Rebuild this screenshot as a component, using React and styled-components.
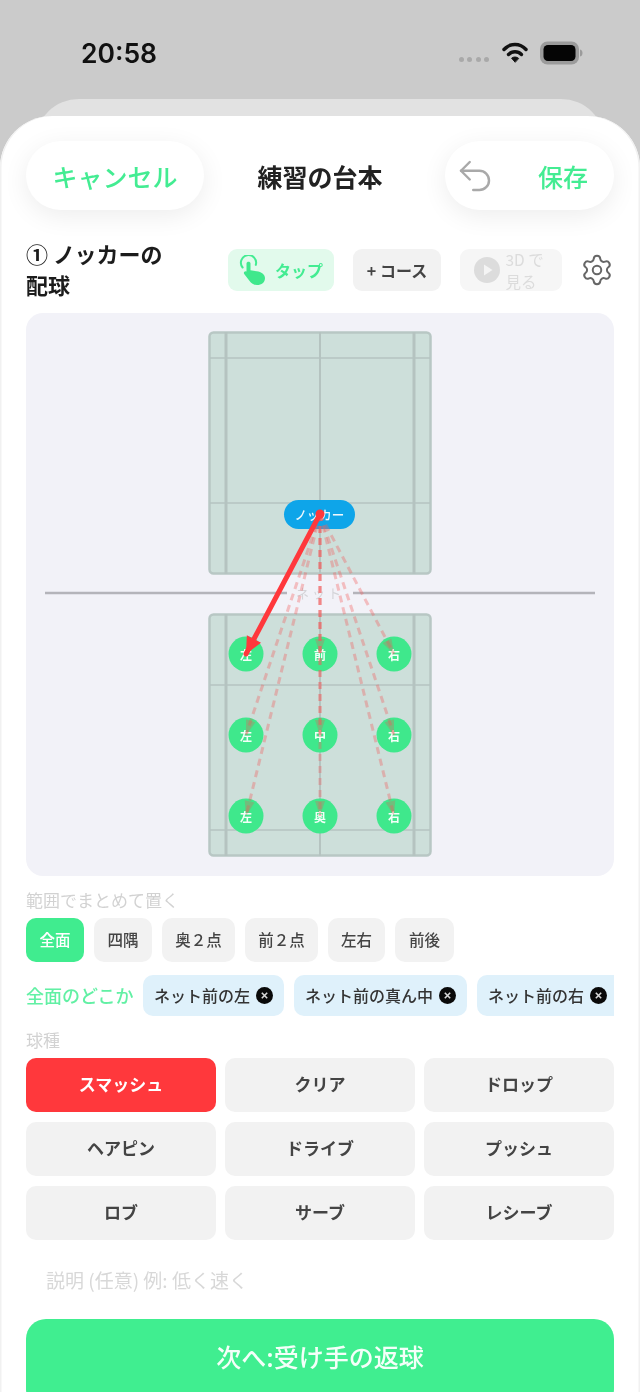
import React from "react";
import styled, { createGlobalStyle } from "styled-components";
import { Settings, Undo2 } from "lucide-react";

const Global = createGlobalStyle`
  html, body { margin: 0; padding: 0; background: #cbcbcb; }
  body { font-family: "Noto Sans CJK JP", "Noto Sans", sans-serif; }
  * { box-sizing: border-box; }
`;

const Screen = styled.div`
  position: relative; width: 640px; height: 1392px; overflow: hidden;
  background: #cbcbcb; filter: blur(0.7px);
`;
const StatusBar = styled.div`
  height: 99px; padding: 35px 57px 0 81px; display: flex; align-items: flex-start; justify-content: space-between;
`;
const Time = styled.div`
  font: 600 26.5px/36px "Inter", "Liberation Sans", sans-serif; color: #111;
`;
const StatusIcons = styled.div`
  display: flex; align-items: center; gap: 12px; height: 36px;
`;
const Signal = styled.div`
  display: flex; gap: 3.5px; margin-top: 12px; margin-right: 1px;
  i { display: block; width: 5px; height: 5px; border-radius: 50%; background: #a9a9a9; }
`;
const BackSheet = styled.div`
  height: 60px; margin: 0 35px -43px; background: #e2e2e2; border-radius: 44px 44px 0 0;
`;
const Sheet = styled.div`
  position: relative; height: 1276px; background: #fff; border-radius: 52px 52px 0 0;
  padding: 25px 26px 0; box-shadow: inset 1.5px 0 0 #f1f1f1, inset -1.5px 0 0 #f1f1f1;
`;
const Header = styled.div`
  display: flex; align-items: center; justify-content: space-between; height: 69px;
`;
const Pill = styled.div`
  height: 69px; border-radius: 35px; background: #fff; display: flex; align-items: center;
  box-shadow: 0 6px 26px rgba(0,0,0,.075); color: #43ec92; font-size: 25px; font-weight: 500;
`;
const CancelPill = styled(Pill)` width: 178px; justify-content: center; `;
const SavePill = styled(Pill)` width: 169px; padding: 0 26px 0 9px; justify-content: space-between; `;
const Title = styled.div`
  font-size: 25px; font-weight: 700; color: #222; margin-right: 9px;
`;
const ToolRow = styled.div`
  display: flex; align-items: center; height: 72px; margin-top: 24px; margin-bottom: 8px;
`;
const StepTitle = styled.div`
  width: 202px; font-size: 22px; line-height: 31px; font-weight: 700; color: #1c1c1c; white-space: nowrap; padding-bottom: 3px;
`;
const Tool = styled.div`
  height: 42px; border-radius: 9px; display: flex; align-items: center; justify-content: center; flex: none;
  width: ${p => p.$w}px; margin-right: ${p => p.$mr}px;
  background: ${p => p.$bg}; color: ${p => p.$fg}; font-size: 16px; font-weight: 700; padding-bottom: 1px;
`;
const TapText = styled.span`
  margin-left: 8px;
`;
const ThreeD = styled.span`
  display: block; width: 43px; font-size: 15.5px; line-height: 22px; font-weight: 400; margin-left: 6px; color: #dcdcdc;
`;
const Gear = styled.div`
  color: #666; display: flex; margin-left: 18px;
`;
const Court = styled.div`
  position: relative; height: 563px; background: #f2f2f8; border-radius: 17px; margin-top: -1px; display: flex; justify-content: center;
`;
const CourtArt = styled.svg`
  display: block; width: 588px; height: 563px;
`;
const NetLabel = styled.div`
  position: absolute; left: 261px; top: 271px; width: 66px; text-align: center; font-size: 13px; line-height: 18px; color: #d4d4d8; letter-spacing: 3px;
`;
const Knocker = styled.div`
  position: absolute; left: 258px; top: 187px; width: 71px; height: 29px; border-radius: 15px; background: #0ea5e9; color: #eef8fd;
  display: flex; align-items: center; justify-content: center; font-size: 12.5px; font-weight: 500;
`;
const Spot = styled.div`
  position: absolute; width: 35px; height: 35px; border-radius: 50%; background: #3fe88c; color: #f2fff8;
  display: flex; align-items: center; justify-content: center; font-size: 12px; font-weight: 700; transform: translate(-50%, -50%);
`;
const Overlay = styled.svg`
  position: absolute; left: 0; top: 0; width: 588px; height: 563px; pointer-events: none;
`;
const SectionLabel = styled.div`
  font-size: 17px; line-height: 20px; color: #d2d2d2; margin-top: ${p => p.$mt}px;
`;
const RangeRow = styled.div`
  display: flex; gap: 10px; margin-top: 8px;
`;
const RangeChip = styled.div`
  height: 44px; width: ${p => p.$w}px; border-radius: 10px; display: flex; align-items: center; justify-content: center; padding-bottom: 2px;
  font-size: 15.5px; font-weight: 500; color: ${p => p.$on ? "#fff" : "#444"}; background: ${p => p.$on ? "#40ec8f" : "#f2f2f2"};
`;
const SpotRow = styled.div`
  display: flex; align-items: center; gap: 10px; margin-top: 13px; height: 41px; overflow: hidden;
`;
const SpotLabel = styled.div`
  font-size: 18px; font-weight: 500; color: #62f0a4; white-space: nowrap; width: 107px; flex: none; padding-bottom: 2px;
`;
const SpotChip = styled.div`
  flex: none; height: 41px; width: ${p => p.$w}px; border-radius: ${p => p.$cut ? "10px 0 0 10px" : "10px"}; background: #dff1fb; display: flex; align-items: center; padding-left: 11px; gap: 6px; padding-bottom: 2px;
  font-size: 16px; font-weight: 500; color: #333; white-space: nowrap;
`;
const Close = styled.svg`
  flex: none; width: 17px; height: 17px; margin-top: 2px;
`;
const ShotGrid = styled.div`
  display: grid; grid-template-columns: repeat(3, 190px); column-gap: 9px; row-gap: 10px; margin-top: 8px;
`;
const Shot = styled.div`
  height: 54px; border-radius: 10px; display: flex; align-items: center; justify-content: center; padding-bottom: 3px;
  font-size: 17px; font-weight: 700; color: ${p => p.$on ? "#fff" : "#444"}; background: ${p => p.$on ? "#ff383c" : "#f2f2f2"};
`;
const Note = styled.div`
  margin-top: 25px; padding-left: 20px; font-size: 19px; line-height: 30px; color: #d8d8d8; height: 30px;
`;
const Next = styled.div`
  margin-top: 24px; height: 90px; border-radius: 20px; background: #40ee90; color: #f4fff9;
  display: flex; align-items: flex-start; justify-content: center; padding-top: 18px; font-size: 25px; line-height: 38px; font-weight: 500;
`;

const Wifi = () => (
  <svg width="26" height="22" viewBox="0 0 26 22" fill="none" stroke="#111" strokeLinecap="round">
    <path d="M2 7.5C8 0.8 18 0.8 24 7.5" strokeWidth="3.4" />
    <path d="M6.5 12.5C10.2 8.8 15.8 8.8 19.5 12.5" strokeWidth="3.4" />
    <path d="M13 20l-3.4-3.8c2-1.6 4.8-1.6 6.8 0z" fill="#111" strokeWidth="1" strokeLinejoin="round" />
  </svg>
);
const Battery = () => (
  <svg width="43" height="24" viewBox="0 0 43 24">
    <rect x="0" y="0.5" width="39" height="23" rx="7.5" fill="#9b9b9b" />
    <rect x="3.5" y="4" width="32" height="16" rx="4.5" fill="#050505" />
    <path d="M40 8.5c2 .5 2.5 2 2.5 3.5s-.5 3-2.5 3.5z" fill="#9b9b9b" />
  </svg>
);
const Tap = () => (
  <svg width="28" height="30" viewBox="0 0 28 30" fill="none">
    <path d="M3.6 12.5a7.6 7.6 0 1 1 13.2-2.6" stroke="#43ec92" strokeWidth="2" strokeLinecap="round" />
    <path d="M7.5 8.5c0-2.4 4-2.4 4 0v6.8l6.2 1c4.6.8 8.3 3 8.3 6.7 0 4.4-3.4 7-8 7-3.6 0-5.8-1.5-7.6-4.2l-5.2-6.8c-1.3-2 1.4-3.8 2.9-2l-.6.2z" fill="#3fe88c" />
  </svg>
);
const Play = () => (
  <svg width="26" height="26" viewBox="0 0 26 26">
    <circle cx="13" cy="13" r="13" fill="#dcdcdc" />
    <path d="M10 7.5v11l8.5-5.5z" fill="#f4f4f4" />
  </svg>
);
const CloseIcon = () => (
  <Close viewBox="0 0 17 17">
    <circle cx="8.5" cy="8.5" r="8.5" fill="#0a0a0a" />
    <path d="M5.8 5.8l5.4 5.4M11.2 5.8l-5.4 5.4" stroke="#d9d9d9" strokeWidth="1.6" />
  </Close>
);

const ox = 26, oy = 313;
const xs = [246, 320, 394], ys = [654, 735, 816];
const dots = ys.flatMap(y => xs.map(x => ({ x: x - ox, y: y - oy })));
const labels = ["左", "前", "右", "左", "中", "右", "左", "奥", "右"];
const origin = { x: 320 - ox, y: 514 - oy };

const arrowHead = (d, len, half) => {
  const dx = origin.x - d.x, dy = origin.y - d.y;
  const n = Math.hypot(dx, dy), ux = dx / n, uy = dy / n;
  const bx = d.x + ux * len, by = d.y + uy * len;
  return `${d.x},${d.y} ${bx - uy * half},${by + ux * half} ${bx + uy * half},${by - ux * half}`;
};

const CourtSide = ({ top, horiz }) => (
  <g>
    <rect x={183.5} y={top + 0.5} width={221} height={241} rx={4} fill="#cddfda" stroke="#b8c7c4" strokeWidth="2.5" />
    <g stroke="#b5c3c0">
      <line x1={200} x2={200} y1={top} y2={top + 242} strokeWidth="3" />
      <line x1={294} x2={294} y1={top} y2={top + 242} strokeWidth="2" />
      <line x1={388} x2={388} y1={top} y2={top + 242} strokeWidth="3" />
    </g>
    <g stroke="#b5c3c0" strokeWidth="1.5">
      {horiz.map(h => <line key={h} x1={184} x2={404} y1={top + h} y2={top + h} />)}
    </g>
  </g>
);

const ranges = [["全面", 58, true], ["四隅", 58], ["奥２点", 73], ["前２点", 73], ["左右", 57], ["前後", 59]];
const shots = ["スマッシュ", "クリア", "ドロップ", "ヘアピン", "ドライブ", "プッシュ", "ロブ", "サーブ", "レシーブ"];

export default function App() {
  return (
    <Screen>
      <Global />
      <StatusBar>
        <Time>20:58</Time>
        <StatusIcons>
          <Signal><i /><i /><i /><i /></Signal>
          <Wifi />
          <Battery />
        </StatusIcons>
      </StatusBar>
      <BackSheet />
      <Sheet>
        <Header>
          <CancelPill>キャンセル</CancelPill>
          <Title>練習の台本</Title>
          <SavePill>
            <Undo2 size={42} color="#a9a9a9" strokeWidth={1.4} />
            <span>保存</span>
          </SavePill>
        </Header>
        <ToolRow>
          <StepTitle>① ノッカーの<br />配球</StepTitle>
          <Tool $w={106} $mr={19} $bg="#e2faec" $fg="#43ec92"><Tap /><TapText>タップ</TapText></Tool>
          <Tool $w={88} $mr={19} $bg="#f2f2f2" $fg="#444">+ コース</Tool>
          <Tool $w={102} $mr={0} $bg="#f6f6f6" $fg="#dcdcdc"><Play /><ThreeD>3D で見る</ThreeD></Tool>
          <Gear><Settings size={34} strokeWidth={1.4} /></Gear>
        </ToolRow>
        <Court>
          <CourtArt viewBox="0 0 588 563">
            <CourtSide top={19} horiz={[26, 171]} />
            <CourtSide top={301} horiz={[71, 216]} />
            <g stroke="#b4b4ba" strokeWidth="2.5">
              <line x1={19} x2={261} y1={280} y2={280} />
              <line x1={327} x2={569} y1={280} y2={280} />
            </g>
          </CourtArt>
          <NetLabel>ネット</NetLabel>
          <Knocker>ノッカー</Knocker>
          {dots.map((d, i) => <Spot key={i} style={{ left: d.x, top: d.y }}>{labels[i]}</Spot>)}
          <Overlay viewBox="0 0 588 563">
            {dots.slice(1).map((d, i) => (
              <g key={i}>
                <line x1={origin.x} y1={origin.y} x2={d.x} y2={d.y} stroke="#f25f5f" strokeOpacity=".36" strokeWidth="3" strokeDasharray="7 5" />
                <polygon points={arrowHead(d, 15, 5)} fill="#e45b5b" fillOpacity=".3" />
              </g>
            ))}
            <line x1={origin.x} y1={origin.y} x2={dots[0].x} y2={dots[0].y} stroke="#ff383c" strokeWidth="5" strokeLinecap="round" />
            <polygon points={arrowHead(dots[0], 17, 8)} fill="#ff383c" />
            <circle cx={origin.x} cy={origin.y} r="4.5" fill="#ff383c" />
          </Overlay>
        </Court>
        <SectionLabel $mt={14}>範囲でまとめて置く</SectionLabel>
        <RangeRow>
          {ranges.map(([t, w, on]) => <RangeChip key={t} $w={w} $on={on}>{t}</RangeChip>)}
        </RangeRow>
        <SpotRow>
          <SpotLabel>全面のどこか</SpotLabel>
          <SpotChip $w={141}>ネット前の左<CloseIcon /></SpotChip>
          <SpotChip $w={173}>ネット前の真ん中<CloseIcon /></SpotChip>
          <SpotChip $w={137} $cut>ネット前の右<CloseIcon /></SpotChip>
        </SpotRow>
        <SectionLabel $mt={14}>球種</SectionLabel>
        <ShotGrid>
          {shots.map((s, i) => <Shot key={s} $on={i === 0}>{s}</Shot>)}
        </ShotGrid>
        <Note>説明 (任意) 例: 低く速く</Note>
        <Next>次へ:受け手の返球</Next>
      </Sheet>
    </Screen>
  );
}
